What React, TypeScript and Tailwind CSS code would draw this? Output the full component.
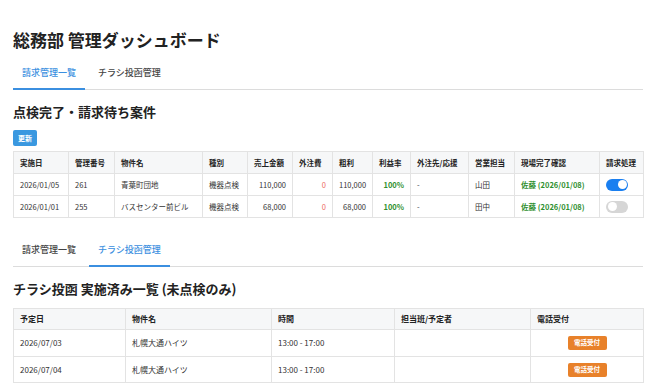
import { useState } from 'react'

type Tab = 'seikyu' | 'chirashi'

const FONT = { fontFamily: '"Noto Sans CJK JP", "Noto Sans", sans-serif' }

function Tabs({ active }: { active: Tab }) {
  const tabs: { key: Tab; label: string }[] = [
    { key: 'seikyu', label: '請求管理一覧' },
    { key: 'chirashi', label: 'チラシ投函管理' },
  ]
  return (
    <div className="flex gap-[4px] border-b border-[#dcdcdc]">
      {tabs.map((t) => (
        <div
          key={t.key}
          className={
            t.key === active
              ? 'h-[32px] flex items-center px-[9px] text-[9px] -mb-px border-b-2 border-[#3b8fe0] text-[#3b8fe0] font-medium'
              : 'h-[32px] flex items-center px-[9px] text-[9px] -mb-px border-b-2 border-transparent text-[#444] font-medium'
          }
        >
          {t.label}
        </div>
      ))}
    </div>
  )
}

function Toggle({ on }: { on: boolean }) {
  return (
    <div
      className={
        on
          ? 'w-[22px] h-[12px] rounded-full bg-[#1a7ff0] flex items-center justify-end px-[1.5px]'
          : 'w-[22px] h-[12px] rounded-full bg-[#d6d6d6] flex items-center justify-start px-[1.5px]'
      }
    >
      <div className="w-[9px] h-[9px] rounded-full bg-white" />
    </div>
  )
}

const seikyuRows = [
  { date: '2026/01/05', no: '261', name: '青葉町団地', kind: '機器点検', sales: '110,000', gaichu: '0', arari: '110,000', rate: '100%', saki: '-', tanto: '山田', kakunin: '佐藤 (2026/01/08)', on: true },
  { date: '2026/01/01', no: '255', name: 'バスセンター前ビル', kind: '機器点検', sales: '68,000', gaichu: '0', arari: '68,000', rate: '100%', saki: '-', tanto: '田中', kakunin: '佐藤 (2026/01/08)', on: false },
]

const chirashiRows = [
  { date: '2026/07/03', name: '札幌大通ハイツ', time: '13:00 - 17:00', tanto: '', h: 'h-[27px]' },
  { date: '2026/07/04', name: '札幌大通ハイツ', time: '13:00 - 17:00', tanto: '', h: 'h-[26px]' },
]

function SeikyuTable() {
  const th = 'h-[22px] px-[6px] text-left font-bold border border-[#e3e3e3] bg-[#f6f7f8] text-[#222]'
  const td = 'h-[22px] px-[6px] border border-[#e3e3e3] text-[#333]'
  return (
    <table className="w-full table-fixed border-collapse text-[7.5px]">
      <colgroup>
        <col className="w-[55px]" />
        <col className="w-[46px]" />
        <col className="w-[88px]" />
        <col className="w-[45px]" />
        <col className="w-[45px]" />
        <col className="w-[40px]" />
        <col className="w-[40px]" />
        <col className="w-[38px]" />
        <col className="w-[58px]" />
        <col className="w-[46px]" />
        <col className="w-[85px]" />
        <col className="w-[44px]" />
      </colgroup>
      <thead>
        <tr>
          <th className={th}>実施日</th>
          <th className={th}>管理番号</th>
          <th className={th}>物件名</th>
          <th className={th}>種別</th>
          <th className={th}>売上金額</th>
          <th className={th}>外注費</th>
          <th className={th}>粗利</th>
          <th className={th}>利益率</th>
          <th className={th}>外注先/応援</th>
          <th className={th}>営業担当</th>
          <th className={th}>現場完了確認</th>
          <th className={th}>請求処理</th>
        </tr>
      </thead>
      <tbody>
        {seikyuRows.map((r) => (
          <tr key={r.no}>
            <td className={td}>{r.date}</td>
            <td className={td}>{r.no}</td>
            <td className={td}>{r.name}</td>
            <td className={td}>{r.kind}</td>
            <td className={td + ' text-right'}>{r.sales}</td>
            <td className={td + ' text-right'}><span className="text-[#ec6b5e]">{r.gaichu}</span></td>
            <td className={td + ' text-right'}>{r.arari}</td>
            <td className={td + ' text-right'}><span className="text-[#2f8f2f] font-bold">{r.rate}</span></td>
            <td className={td}>{r.saki}</td>
            <td className={td}>{r.tanto}</td>
            <td className={td}><span className="text-[#2f8f2f] font-bold">{r.kakunin}</span></td>
            <td className={td}>
              <div className="flex pl-[-2px]">
                <Toggle on={r.on} />
              </div>
            </td>
          </tr>
        ))}
      </tbody>
    </table>
  )
}

function ChirashiTable() {
  const th = 'h-[21px] px-[6px] text-left font-bold border border-[#e3e3e3] bg-[#f6f7f8] text-[#222]'
  const td = 'px-[6px] border border-[#e3e3e3] text-[#333]'
  return (
    <table className="w-full table-fixed border-collapse text-[8px]">
      <colgroup>
        <col className="w-[112px]" />
        <col className="w-[146px]" />
        <col className="w-[123px]" />
        <col className="w-[136px]" />
        <col className="w-[113px]" />
      </colgroup>
      <thead>
        <tr>
          <th className={th}>予定日</th>
          <th className={th}>物件名</th>
          <th className={th}>時間</th>
          <th className={th}>担当班/予定者</th>
          <th className={th}>電話受付</th>
        </tr>
      </thead>
      <tbody>
        {chirashiRows.map((r) => (
          <tr key={r.date} className={r.h}>
            <td className={td}>{r.date}</td>
            <td className={td}>{r.name}</td>
            <td className={td}>{r.time}</td>
            <td className={td}>{r.tanto}</td>
            <td className={td}>
              <div className="flex justify-center">
                <button
                  type="button"
                  className="h-[14px] w-[39px] rounded-[2px] bg-[#e8812a] text-white text-[6.5px] font-bold flex items-center justify-center"
                >
                  電話受付
                </button>
              </div>
            </td>
          </tr>
        ))}
      </tbody>
    </table>
  )
}

export default function App() {
  const [, setTick] = useState(0)
  return (
    <div className="min-h-screen bg-white pl-[13px] pr-[10px] pt-[28px]" style={FONT}>
      <h1 className="text-[17px] leading-[24px] font-bold text-[#222]">総務部 管理ダッシュボード</h1>

      <div className="mt-[6px]">
        <Tabs active="seikyu" />
      </div>

      <h2 className="mt-[13px] text-[13px] leading-[18px] font-bold text-[#222]">点検完了・請求待ち案件</h2>

      <button
        type="button"
        onClick={() => setTick((n) => n + 1)}
        className="mt-[9px] h-[16px] w-[24px] rounded-[2px] bg-[#3a98e0] text-white text-[7px] font-bold flex items-center justify-center"
      >
        更新
      </button>

      <div className="mt-[5px]">
        <SeikyuTable />
      </div>

      <div className="mt-[17px]">
        <Tabs active="chirashi" />
      </div>

      <h2 className="mt-[13px] text-[13px] leading-[18px] font-bold text-[#222]">チラシ投函 実施済み一覧 (未点検のみ)</h2>

      <div className="mt-[10px]">
        <ChirashiTable />
      </div>
    </div>
  )
}
